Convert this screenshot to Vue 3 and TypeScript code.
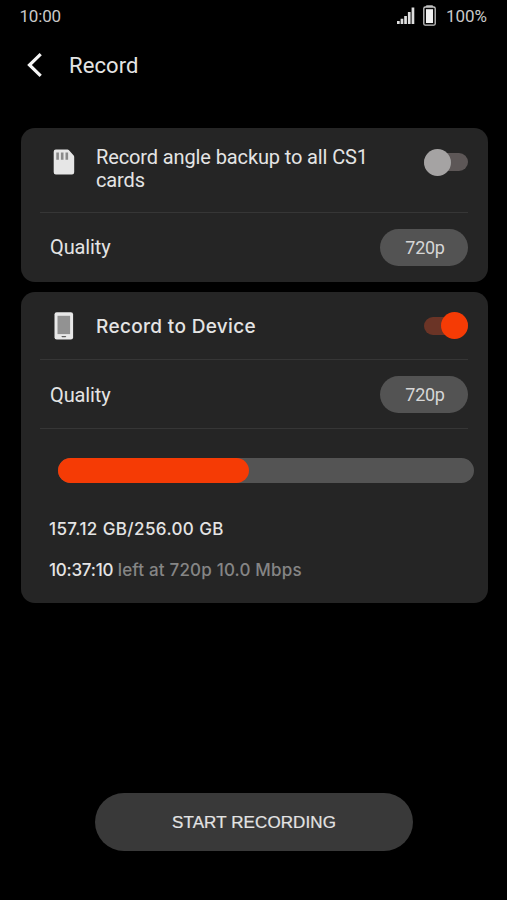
<script setup lang="ts">
import { ref } from 'vue'

const backup = ref(false)
const device = ref(true)
const quality = '720p'
const fill = ref(46)
</script>

<template>
  <main class="screen">
    <header class="status">
      <span class="clock">10:00</span>
      <div class="status-right">
        <svg class="signal" width="18" height="18" viewBox="0 0 18 18">
          <path d="M0 14h2.7v3H0zM3.6 11.8h2.7V17H3.6zM7.2 8.9h2.7V17H7.2zM10.9 5h2.7v12h-2.7zM14.6 .4h2.7V17h-2.7z" fill="#dedede" />
        </svg>
        <svg class="battery" width="13" height="21" viewBox="0 0 13 21">
          <path d="M3.4 2V.8h6.2V2" fill="#bbb" stroke="#bbb" />
          <rect x=".8" y="2" width="11.4" height="18.2" rx="1.5" fill="#090909" stroke="#c8c8c8" stroke-width="1.3" />
          <rect x="3" y="4.2" width="7" height="13.8" fill="#f3f3f3" />
        </svg>
        <span class="percent">100%</span>
      </div>
    </header>

    <nav class="title-bar">
      <svg class="back" width="16" height="26" viewBox="0 0 16 26">
        <path d="M13.7 2.2 2.5 13l11.2 10.8" fill="none" stroke="#f5f5f5" stroke-width="3.2" />
      </svg>
      <h1>Record</h1>
    </nav>

    <section class="card backup">
      <div class="row option">
        <svg class="icon" width="30" height="30" viewBox="0 0 30 30">
          <path d="M7 2.6h11.4q1 0 1.6.7l4.5 5q.7.8.7 1.7v15.2a2.2 2.2 0 0 1-2.2 2.2H6.9a2.2 2.2 0 0 1-2.2-2.2V4.8A2.2 2.2 0 0 1 7 2.6z" fill="#e6e6e6" />
          <path d="M7.3 5.6h2.6v7.2H7.3zM11.9 5.6h2.6v7.2h-2.6zM16.5 5.6h2.6v7.2h-2.6z" fill="#898989" />
        </svg>
        <span class="label wrap">Record angle backup to all CS1 cards</span>
        <button class="toggle" :class="{ on: backup }" aria-label="Record backup" @click="backup = !backup"><i></i></button>
      </div>
      <div class="row quality">
        <span class="label">Quality</span>
        <button class="pill">{{ quality }}</button>
      </div>
    </section>

    <section class="card device">
      <div class="row option">
        <svg class="icon" width="30" height="30" viewBox="0 0 30 30">
          <rect x="5.5" y="1.3" width="18.6" height="27.2" rx="2.2" fill="#e8e8e8" />
          <path d="M8.5 4.8h12.6v18.3H8.5z" fill="#929292" />
          <path d="M12.3 24.9h5l-.8 1.4h-3.4z" fill="#606060" />
        </svg>
        <span class="label device-label">Record to Device</span>
        <button class="toggle" :class="{ on: device }" aria-label="Record to device" @click="device = !device"><i></i></button>
      </div>
      <div class="row quality">
        <span class="label">Quality</span>
        <button class="pill">{{ quality }}</button>
      </div>
      <div class="storage">
        <div class="bar"><div class="used" :style="{ width: fill + '%' }"></div></div>
        <p class="space">157.12 GB/256.00 GB</p>
        <p class="remaining"><b>10:37:10</b> <span>left at 720p 10.0 Mbps</span></p>
      </div>
    </section>

    <button class="start">START RECORDING</button>
  </main>
</template>

<style>
body { background: #000; }
</style>

<style scoped>
* { box-sizing: border-box; }
.screen {
  display: flex;
  flex-direction: column;
  width: 507px;
  height: 900px;
  background: #000;
  color: #e4e4e4;
  font-family: Roboto, sans-serif;
  overflow: hidden;
}
button { border: 0; padding: 0; font-family: inherit; color: inherit; }
.status {
  height: 31px;
  padding: 0 20px;
  display: flex;
  align-items: center;
  justify-content: space-between;
  font-size: 17px;
  color: #c9c9c9;
}
.clock { letter-spacing: -.2px; margin-left: -.5px; }
.status-right { display: flex; align-items: center; }
.battery { margin: 0 10px 0 8px; }
.title-bar { height: 69px; display: flex; align-items: center; padding-left: 27px; }
.title-bar h1 { margin: 0 0 0 26px; font-size: 22px; font-weight: 400; letter-spacing: .1px; }
.back { margin-bottom: 2px; }
.card {
  width: 467px;
  margin-left: 20.5px;
  background: #252525;
  border-radius: 14px;
  padding: 0 19.5px;
}
.backup { margin-top: 27.5px; height: 154px; }
.device { margin-top: 10.5px; height: 311px; }
.row { display: flex; border-bottom: 1.5px solid #363636; }
.backup .quality { border: 0; }
.icon { margin-left: 9px; flex: none; }
.label { font-size: 20px; line-height: 23px; letter-spacing: -.12px; }
.option .label { margin-left: 17px; flex: 1; }
.backup .option { height: 85px; padding-top: 18px; }
.wrap { max-width: 285px; }
.device .option { height: 68px; align-items: center; }
.device .device-label { font-family: Inter, sans-serif; font-size: 19px; font-weight: 450; letter-spacing: .34px; padding-top: 2px; }
.toggle {
  width: 44px;
  height: 27px;
  margin-left: auto;
  display: grid;
  align-items: center;
  flex: none;
  background: none;
}
.toggle::before {
  content: '';
  grid-area: 1 / 1;
  width: 44px;
  height: 18px;
  border-radius: 9px;
  background: #5d5757;
}
.toggle i { grid-area: 1 / 1; width: 27px; height: 27px; border-radius: 50%; background: #a5a3a3; }
.backup .toggle { margin-top: 3px; }
.backup .icon { margin-top: 1px; }
.toggle.on::before { background: #6b3426; }
.toggle.on i { background: #f53b05; justify-self: end; }
.quality { height: 69px; align-items: center; padding-left: 10px; justify-content: space-between; }
.backup .quality { height: 70px; }
.device .quality .label { padding-top: 2px; }
.pill {
  width: 88px;
  height: 37px;
  border-radius: 19px;
  background: #535353;
  font-size: 18px;
  letter-spacing: -.3px;
  color: #d6d6d6;
  padding-left: 2px;
}
.bar { margin: 29px 0 0 18px; width: 416px; height: 25px; border-radius: 13px; background: #545454; }
.used { height: 100%; border-radius: 13px; background: #f53b05; }
.storage p { margin: 0 0 0 9px; font: 450 17px/24px Inter, sans-serif; white-space: nowrap; }
.storage .space { margin-top: 34px; letter-spacing: .4px; }
.storage .remaining { margin-top: 17px; }
.remaining b { font-weight: 500; letter-spacing: -.25px; }
.remaining span { color: #858585; letter-spacing: .18px; }
.start {
  width: 318px;
  height: 58px;
  margin: 190px 0 0 95px;
  flex: none;
  border-radius: 29px;
  background: #393939;
  font: 400 17px 'Liberation Sans', sans-serif;
  letter-spacing: .1px;
  -webkit-text-stroke: .2px;
  padding-top: 2px;
}
</style>
